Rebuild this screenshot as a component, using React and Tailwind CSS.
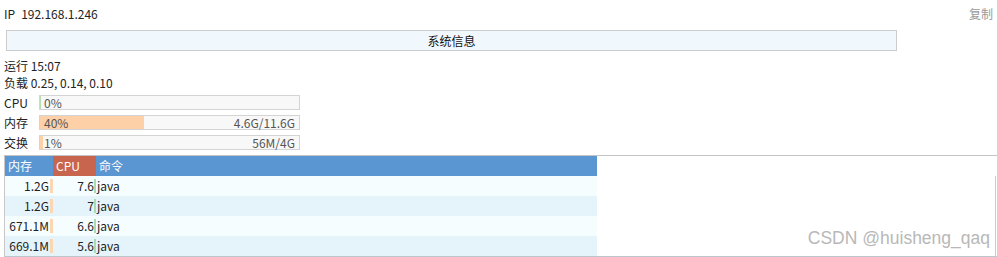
const procs = [
  { mem: '1.2G', cpu: '7.6', cmd: 'java' },
  { mem: '1.2G', cpu: '7', cmd: 'java' },
  { mem: '671.1M', cpu: '6.6', cmd: 'java' },
  { mem: '669.1M', cpu: '5.6', cmd: 'java' },
];

const bars = [
  { label: 'CPU', pct: 0, left: '0%', right: '' },
  { label: '内存', pct: 40, left: '40%', right: '4.6G/11.6G' },
  { label: '交换', pct: 1, left: '1%', right: '56M/4G' },
];

export default function App() {
  return (
    <div
      className="relative w-[997px] h-[257px] overflow-hidden bg-white pl-[4px] text-[12px] text-[#222]"
      style={{ fontFamily: '"Noto Sans CJK SC", "Noto Sans", sans-serif' }}
    >
      {/* header line */}
      <div className="flex h-[30px] items-center justify-between pr-[4px] pb-[2px]">
        <div className="flex gap-[6px]">
          <span>IP</span>
          <span>192.168.1.246</span>
        </div>
        <span className="text-[#999]">复制</span>
      </div>

      <div className="ml-[2px] flex h-[21px] w-[891px] items-center justify-center border border-[#ccc] bg-[#f0f7fd] text-[#111]">
        系统信息
      </div>

      <div className="mt-[6px] leading-[17px]">
        <div>运行 15:07</div>
        <div>负载 0.25, 0.14, 0.10</div>
      </div>

      {/* usage bars */}
      <div className="mt-[2px]">
        {bars.map((b) => (
          <div key={b.label} className="flex h-[20px] items-start pt-[2px]">
            <div className="w-[35px] leading-[15px]">{b.label}</div>
            <div className="relative h-[15px] w-[261px] border border-[#d4d4d4] bg-[#f8f8f8]">
              <div
                className="absolute left-0 top-0 h-full"
                style={{ width: b.pct > 0 ? `${b.pct}%` : '1px', background: b.pct > 0 ? '#fdd0a8' : '#b8dcb8' }}
              />
              <div className="relative flex h-full items-center justify-between px-[4px] text-[12px] leading-none text-[#555]">
                <span>{b.left}</span>
                <span>{b.right}</span>
              </div>
            </div>
          </div>
        ))}
      </div>

      {/* process table */}
      <div className="mt-[2px] border-t border-l border-b border-t-[#c4c4c4] border-l-[#c8c8c8] border-b-[#bcc6d0]">
        <div className="flex h-[20px] w-[592px] items-center bg-[#5a96d2] text-white">
          <div className="w-[48px] pl-[3px]">内存</div>
          <div className="flex h-full w-[43px] items-center bg-[#c8654e] pl-[3px]">CPU</div>
          <div className="pl-[3px]">命令</div>
        </div>
        <div className="mr-[1px] flex h-[80px] border-r border-[#b4d0e8]">
          <div className="w-[592px]">
            {procs.map((p, i) => (
              <div
                key={i}
                className={`flex h-[20px] items-center ${i % 2 === 0 ? 'bg-[#f5fdff]' : 'bg-[#e5f4fa]'}`}
              >
                <div className="w-[44px] text-right">{p.mem}</div>
                <div className="ml-[1px] h-[14px] w-[3px] bg-[#fdd5b0]" />
                <div className="w-[41px] text-right">{p.cpu}</div>
                <div className="h-[14px] w-[2px] bg-[#a8dbb0]" />
                <div className="pl-[1px]">{p.cmd}</div>
              </div>
            ))}
          </div>
        </div>
      </div>

      <div
        className="absolute right-[7px] bottom-[6px] text-[17.5px] text-[#b8b8b8]"
        style={{ fontFamily: '"Liberation Sans", Arial, sans-serif' }}
      >
        CSDN @huisheng_qaq
      </div>
    </div>
  );
}
